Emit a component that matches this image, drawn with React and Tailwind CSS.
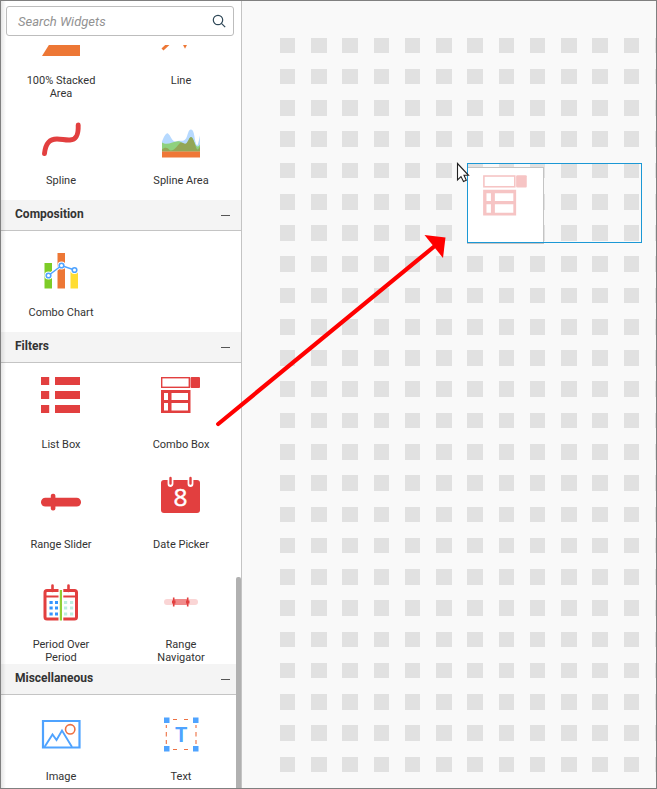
import React from "react";

const RED = "#e23f3f";
const COLS = Array.from({ length: 13 }, (_, i) => {
  const start = Math.round(279.8 + i * 31.25);
  return [start, Math.round(279.8 + i * 31.25 + 15.62)];
});
const ROWS = Array.from({ length: 24 }, (_, i) => {
  const start = Math.round(37.6 + i * 31.26);
  return [start, Math.round(37.6 + i * 31.26 + 15.62)];
});

function Icon({ children }) {
  return (
    <svg className="block h-[42px] w-[42px] shrink-0 overflow-visible" viewBox="0 0 42 42" fill="none">
      {children}
    </svg>
  );
}

function ComboShape() {
  return (
    <>
      <rect x="1.7" y="2.7" width="27.600" height="9.600" stroke={RED} strokeWidth="1.4" />
      <rect x="30.500" y="2" width="9.500" height="11" rx="1" fill={RED} />
      <path
        fillRule="evenodd"
        fill={RED}
        d="M1 15H30.500V38H1ZM4 18V25H8V18ZM11.500 18V25H28V18ZM4 28V35.500H8V28ZM11.500 28V35.500H28V28Z"
      />
    </>
  );
}

const icons = {
  stacked: <path d="M2 45 L14.500 25 H40 V45 Z" fill="#ed7735" />,
  line: (
    <>
      <path d="M2.500 38.500 L12 29.500" stroke="#ed7735" strokeWidth="2.900" />
      <path d="M21 30 H29 L25 37.700Z" fill="#ed7735" />
    </>
  ),
  spline: (
    <path
      d="M4.500 42.500 C5.500 33 9 28 17 28 C22 28 25 29.300 30 29 C37 28.600 38.500 23 38.200 14"
      stroke={RED}
      strokeWidth="4.900"
      strokeLinecap="round"
    />
  ),
  splineArea: (
    <g transform="translate(0 6.500)">
      <path d="M2 33V24C4 19 6 15 8 16C11 18 12 25 16 24C20 22 23 25 26 21C28 18 28 12 31 12C35 12 34 24 37 28C38 28 39 22 40 18V33Z" fill="#b6d9ff" />
      <path d="M2 34V25C8 29 15 22 20 24L26 28C28 28 29 18 32 20C35 24 36 33 40 27V34Z" fill="#8fd17e" />
      <path d="M2 34V32C5 29 8 30 10 33C15 34 18 26 21 25C25 25 24 28 27 25C29 22 30 18 32 20C35 24 36 33 38 32L40 29V34Z" fill="#93a657" />
      <path d="M2 34H40V40H2Z" fill="#ef7737" />
    </g>
  ),
  comboChart: (
    <g transform="translate(0 7)">
      <path d="M4.500 13H12V38.500H4.500Z" fill="#7dcc27" />
      <path d="M17.500 3H25V38.500H17.500Z" fill="#ed7735" />
      <path d="M30.500 21.500H38V38.500H30.500Z" fill="#ffdd33" />
      <path d="M8.500 25.500L21.500 15.500L34.500 20" stroke="#fff" strokeWidth="3" />
      {[[8.5, 25.5], [21.5, 15.5], [34.5, 20]].map(([x, y]) => (
        <circle key={x} cx={x} cy={y} r="4" fill="#fff" />
      ))}
      <path d="M8.500 25.500L21.500 15.500L34.500 20" stroke="#4fa3ff" strokeWidth="1.500" />
      {[[8.5, 25.5], [21.5, 15.5], [34.5, 20]].map(([x, y]) => (
        <circle key={x} cx={x} cy={y} r="2.300" fill="#fff" stroke="#4fa3ff" strokeWidth="1.600" />
      ))}
    </g>
  ),
  listBox: (
    <path
      fill={RED}
      d="M1 2H9.200V10H1ZM15 2H40V10H15ZM1 16H9.200V24H1ZM15 16H40V24H15ZM1 30H9.200V38H1ZM15 30H40V38H15Z"
    />
  ),
  comboBox: <ComboShape />,
  slider: (
    <>
      <rect x="1" y="22.800" width="40" height="8.700" rx="4.300" fill={RED} />
      <rect x="10.800" y="18.800" width="4.600" height="16.800" rx="2" fill={RED} />
    </>
  ),
  date: (
    <>
      <rect x="1" y="5" width="39" height="33" rx="3" fill={RED} />
      <path d="M8.200 4V9a2.300 2.300 0 0 0 4.600 0V4M28.200 4V9a2.300 2.300 0 0 0 4.600 0V4" fill="#fff" stroke="#fff" strokeWidth="1.200" />
      <path d="M10.500 3V8.500M30.500 3V8.500" stroke={RED} strokeWidth="2.400" strokeLinecap="round" />
      <text x="20.600" y="30.500" textAnchor="middle" fill="#fff" stroke="#fff" strokeWidth="0.500" fontSize="24.500" fontFamily="Open Sans, sans-serif">8</text>
    </>
  ),
  period: (
    <g transform="translate(-0.5 8)">
      <rect x="5.500" y="7.500" width="31.500" height="28.500" rx="2" stroke={RED} strokeWidth="3" />
      <path d="M5 13.500H38" stroke={RED} strokeWidth="2.200" />
      <path d="M13 2.500V8M29 2.500V8" stroke={RED} strokeWidth="2.600" strokeLinecap="round" />
      <path d="M19 5H23.800V39H19Z" fill="#fff" />
      <path d="M21.400 7V37.500" stroke="#91cf35" strokeWidth="2.200" />
      <path fill="#3595ff" d="M10 18h3.200v3H10zM15.500 18h3v3h-3zM10 23.500h3.200v3H10zM15.500 23.500h3v3h-3zM10 29.500h3.200v3H10zM15.500 29.500h3v3h-3z" />
      <path fill="#bcefdf" d="M24.500 18h3.200v3h-3.200zM30.500 18h3.200v3h-3.200zM24.500 23.500h3.200v3h-3.200zM30.500 23.500h3.200v3h-3.200zM24.500 29.500h3.200v3h-3.200zM30.500 29.500h3.200v3h-3.200z" />
    </g>
  ),
  navigator: (
    <g transform="translate(0 8)">
      <rect x="4" y="16" width="34" height="6" rx="3" fill="#fad5d5" />
      <path d="M13.500 16H28V22H13.500Z" fill="#f08b8b" />
      <path d="M13.700 14.500V23.500M27.700 14.500V23.500" stroke={RED} strokeWidth="1.600" />
      <path d="M12 19h3.500M26 19h3.500" stroke={RED} strokeWidth="2.800" />
    </g>
  ),
  image: (
    <g transform="translate(0 4)">
      <path d="M3 10H39.500V36.500H3Z" stroke="#4fa3ff" strokeWidth="2.200" />
      <path d="M4.500 36L12.500 23.500L16.500 29L22 19.500L32 36" stroke="#4fa3ff" strokeWidth="1.900" />
      <circle cx="30.200" cy="18.300" r="4.700" stroke="#ed7042" strokeWidth="1.600" />
    </g>
  ),
  text: (
    <g transform="translate(0 4)">
      <path d="M13 8.500H17M24 8.500H28M13 38.500H17M24 38.500H28" stroke="#ed7042" strokeWidth="1.100" />
      <path d="M6.300 14V17M6.300 21V25.500M6.300 29V33M36 14V17M36 21V25.500M36 29V33" stroke="#ed7042" strokeWidth="1.100" />
      <path d="M4 6.500H9.500V12H4ZM33 6.500H38.500V12H33ZM4 35H9.500V40.500H4ZM33 35H38.500V40.500H33Z" fill="#4fa3ff" />
      <text x="21.100" y="30.500" textAnchor="middle" fill="#4fa3ff" fontSize="20" fontWeight="700" fontFamily="Roboto, sans-serif">T</text>
    </g>
  ),
};

const sections = [
  { items: [["stacked", "100% Stacked Area"], ["line", "Line"], ["spline", "Spline"], ["splineArea", "Spline Area"]] },
  { title: "Composition", items: [["comboChart", "Combo Chart"]] },
  {
    title: "Filters",
    items: [
      ["listBox", "List Box"],
      ["comboBox", "Combo Box"],
      ["slider", "Range Slider"],
      ["date", "Date Picker"],
      ["period", "Period Over Period"],
      ["navigator", "Range Navigator"],
    ],
  },
  { title: "Miscellaneous", items: [["image", "Image"], ["text", "Text"]] },
];

function Widget({ icon, label }) {
  return (
    <div className="flex h-[100px] w-[120px] flex-col items-center pt-[12px]">
      <Icon>{icons[icon]}</Icon>
      <div className="mt-[21px] w-[80px] text-center text-[11px] leading-[13px] text-[#333]">{label}</div>
    </div>
  );
}

function Section({ title, items }) {
  return (
    <section className="shrink-0">
      {title && (
        <header className="flex h-[31px] items-center justify-between border-b border-[#c4c4c4] bg-[#f4f4f4] pr-[11px] pl-[14px]">
          <h2 className="-mt-[3px] text-[12px] font-bold text-[#333]">{title}</h2>
          <span className="h-px w-[9px] bg-[#555]" />
        </header>
      )}
      <div className="flex flex-wrap pb-px">
        {items.map(([icon, label]) => (
          <Widget key={icon} icon={icon} label={label} />
        ))}
      </div>
    </section>
  );
}

function Sidebar() {
  return (
    <aside className="relative flex h-full w-[241px] shrink-0 flex-col border-r border-[#c4c4c4] bg-white">
      <div className="pt-[5px] pr-[7px] pb-[9px] pl-[5px]">
        <div className="flex h-[30px] items-center justify-between rounded-[3px] border border-[#bdbdbd] pr-[7px] pl-[11px]">
          <span className="pt-px text-[13px] text-[#929292] italic">Search Widgets</span>
          <svg className="h-[14px] w-[14px]" viewBox="0 0 14 14" fill="none" stroke="#2f4858" strokeWidth="1.200">
            <circle cx="6" cy="6" r="4.700" />
            <path d="M9.400 9.400L13.200 13.200" />
          </svg>
        </div>
      </div>
      <div className="min-h-0 flex-1 overflow-hidden">
        <div className="-mt-[46px] flex flex-col">
          {sections.map((s, i) => (
            <Section key={i} {...s} />
          ))}
        </div>
      </div>
      <div className="absolute top-[576px] right-0 bottom-0 w-[5px] rounded-t-[2px] bg-[#b1b1b1]" />
      <div className="absolute inset-y-0 left-0 w-[5px] bg-linear-to-r from-black/10 to-transparent" />
    </aside>
  );
}

function DesignCanvas() {
  return (
    <main className="min-w-0 flex-1 overflow-hidden bg-[#f9f9f9]">
      {ROWS.map(([top, bottom], r) => (
        <div key={top} className="flex" style={{ height: bottom - top, marginTop: top - (r ? ROWS[r - 1][1] : 1) }}>
          {COLS.map(([left, right], c) => (
            <div
              key={left}
              className="h-full shrink-0 bg-[#e1e1e1]"
              style={{ width: right - left, marginLeft: left - (c ? COLS[c - 1][1] : 242) }}
            />
          ))}
        </div>
      ))}
    </main>
  );
}

export default function App() {
  return (
    <div className="relative flex h-[789px] w-[657px] overflow-hidden border border-[#808080] font-['Roboto',sans-serif]">
      <Sidebar />
      <DesignCanvas />
      <div className="absolute top-[166px] left-[466px] h-[77px] w-[77px] border border-[#c4c4c4] bg-white">
        <svg className="absolute top-[5px] left-[14px] h-[47px] w-[47px] opacity-30" viewBox="0 0 42 42" fill="none">
          <ComboShape />
        </svg>
      </div>
      <div className="absolute top-[162px] left-[466px] h-[80px] w-[175px] border border-[#1b98d5]" />
      <svg className="absolute -top-px -left-px h-[789px] w-[657px]" viewBox="0 0 657 789" fill="none">
        <path d="M218.200 424L436 245" stroke="#f00" strokeWidth="4.200" strokeLinecap="round" />
        <path d="M424.500 235L445.500 237.500L443 258Z" fill="#f00" />
        <path
          d="M457.500 163.500V180L461 176.600L463.500 181.500L466.300 180.200L464 175.300H468.500Z"
          fill="#fff"
          stroke="#222"
          strokeWidth="1.100"
        />
      </svg>
    </div>
  );
}
